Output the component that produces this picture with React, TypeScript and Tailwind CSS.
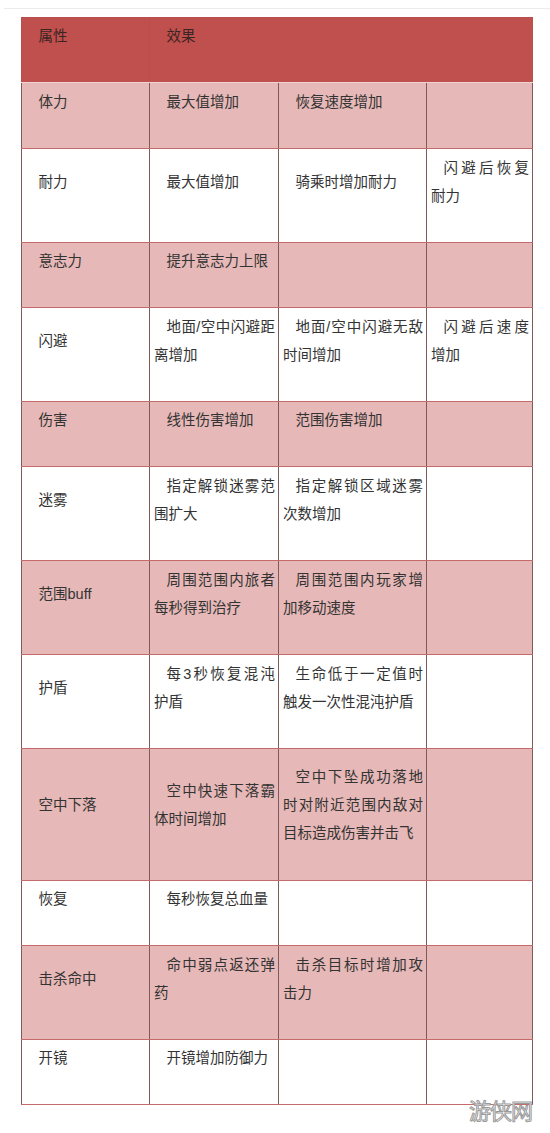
const rows: { name: string; a: string; b: string; c: string; pink: boolean; h: string; pb?: string }[] = [
  { name: '体力', a: '最大值增加', b: '恢复速度增加', c: '', pink: true, h: 'h-[66px]' },
  { name: '耐力', a: '最大值增加', b: '骑乘时增加耐力', c: '闪避后恢复耐力', pink: false, h: 'h-[94px]' },
  { name: '意志力', a: '提升意志力上限', b: '', c: '', pink: true, h: 'h-[65px]' },
  { name: '闪避', a: '地面/空中闪避距离增加', b: '地面/空中闪避无敌时间增加', c: '闪避后速度增加', pink: false, h: 'h-[94px]' },
  { name: '伤害', a: '线性伤害增加', b: '范围伤害增加', c: '', pink: true, h: 'h-[65px]' },
  { name: '迷雾', a: '指定解锁迷雾范围扩大', b: '指定解锁区域迷雾次数增加', c: '', pink: false, h: 'h-[94px]' },
  { name: '范围buff', a: '周围范围内旅者每秒得到治疗', b: '周围范围内玩家增加移动速度', c: '', pink: true, h: 'h-[94px]' },
  { name: '护盾', a: '每3秒恢复混沌护盾', b: '生命低于一定值时触发一次性混沌护盾', c: '', pink: false, h: 'h-[94px]' },
  { name: '空中下落', a: '空中快速下落霸体时间增加', b: '空中下坠成功落地时对附近范围内敌对目标造成伤害并击飞', c: '', pink: true, h: 'h-[132px]', pb: 'pb-[23px]' },
  { name: '恢复', a: '每秒恢复总血量', b: '', c: '', pink: false, h: 'h-[65px]' },
  { name: '击杀命中', a: '命中弱点返还弹药', b: '击杀目标时增加攻击力', c: '', pink: true, h: 'h-[94px]' },
  { name: '开镜', a: '开镜增加防御力', b: '', c: '', pink: false, h: 'h-[65px]' },
];

function Cell({ text, pb }: { text: string; pb?: string }) {
  return (
    <td
      className={`align-middle border-x border-x-[#7e5a5a] border-y border-y-[#c46a6a] pl-[4px] pr-[3px] pt-[4px] ${pb ?? 'pb-[32px]'} indent-[12.5px] text-justify`}
    >
      {text}
    </td>
  );
}

export default function App() {
  return (
    <div className="relative w-[550px] h-[1133px] bg-white overflow-hidden font-['Liberation_Sans','Noto_Sans_CJK_SC',sans-serif] text-[14.5px] leading-[28px] text-[#333]">
      <div className="mt-[8px] ml-[4px] h-px bg-[#ececec]" />
      <table className="mt-[8px] ml-[21px] w-[511px] table-fixed border-collapse">
        <colgroup>
          <col className="w-[128px]" />
          <col className="w-[129px]" />
          <col className="w-[148px]" />
          <col className="w-[106px]" />
        </colgroup>
        <thead>
          <tr className="h-[65px] bg-[#c0504d] text-[#3b2424]">
            <th className="align-middle font-normal text-left border border-[#b5504c] border-b-[#f0d3d2] pl-[4px] pt-[4px] pb-[32px] indent-[12.5px]">
              属性
            </th>
            <th
              colSpan={3}
              className="align-middle font-normal text-left border border-[#b5504c] border-l-[#c0504d] border-b-[#f0d3d2] pl-[4px] pt-[4px] pb-[32px] indent-[12.5px]"
            >
              效果
            </th>
          </tr>
        </thead>
        <tbody>
          {rows.map((r) => (
            <tr key={r.name} className={`${r.h} ${r.pink ? 'bg-[#e6b8b7]' : 'bg-white'}`}>
              <Cell text={r.name} pb={r.pb} />
              <Cell text={r.a} pb={r.pb} />
              <Cell text={r.b} pb={r.pb} />
              <Cell text={r.c} pb={r.pb} />
            </tr>
          ))}
        </tbody>
      </table>
      <div className="absolute left-[469px] top-[1094px] text-[22px] leading-[30px] tracking-[-1px] text-white font-['Noto_Sans_CJK_SC',sans-serif] [-webkit-text-stroke:1px_#9a9a9a]">
        游侠网
      </div>
    </div>
  );
}
